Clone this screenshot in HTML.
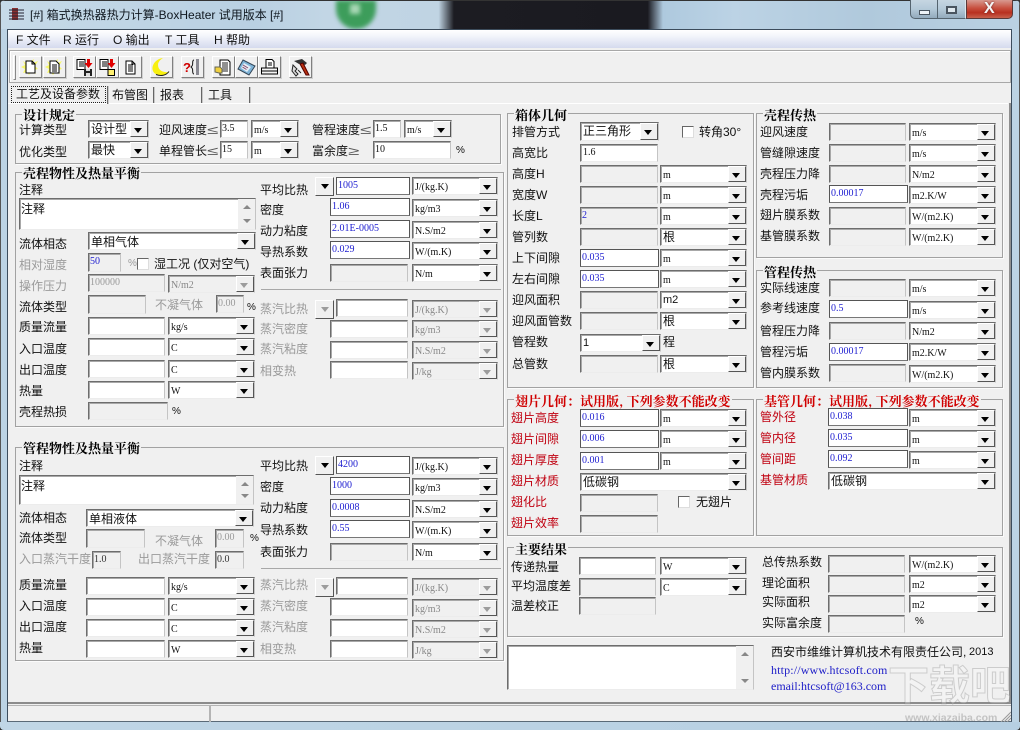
<!DOCTYPE html>
<html lang="zh"><head><meta charset="utf-8"><title>BoxHeater</title>
<style>
html,body{margin:0;padding:0;background:#333}
#a{position:relative;width:1020px;height:730px;overflow:hidden;font:12px/16px "Liberation Sans","Noto Sans CJK SC",sans-serif;color:#111;background:#bcd3e4;border-radius:5px 5px 4px 4px}
#a div,#a span,#a svg{position:absolute;box-sizing:border-box}
.l{white-space:nowrap;height:16px}
.g{color:#9a9a9a}
.r{color:#c00010}
.h{font:bold 13px/15px "Noto Serif CJK SC","Liberation Serif",serif;background:#f0f0f0;padding:0 1px;white-space:nowrap;color:#000;height:15px}
.hr{color:#d00000}
.f{border:1px solid #a2a2a2;box-shadow:1px 1px 0 #fbfbfb}
.q{transform:scaleX(1.7);transform-origin:0 0}
#a .i,#a .c{height:18px;border:1px solid;border-color:#6d6d6d #c4c4c4 #ececec #6d6d6d;box-shadow:inset 1px 1px 0 #a8a8a8;background:#f0f0f0;font:10px/16px "Liberation Serif","Noto Sans CJK SC",serif;padding-left:1px;white-space:nowrap;overflow:hidden}
#a .w{background:#fff}
#a .k{border-color:#555 #555 #777 #555;box-shadow:none}
.u{color:#1c1cd0}
#a .c{background:#fff;line-height:19px;padding-left:2px}
#a .z{font:12px/16px "Liberation Sans","Noto Sans CJK SC",sans-serif}
#a .c.y{font:11px/17px "Liberation Sans",sans-serif}
#a .c b{position:absolute;right:0;top:0;bottom:0;width:16px;background:#f0f0f0;border:1px solid;border-color:#fff #555 #555 #fff}
#a .c b:after,.bt:after{content:"";position:absolute;left:3px;top:6px;border:4px solid transparent;border-top:5px solid #000;border-bottom:0}
#a .d{color:#888;background:#f0f0f0}
#a .d b:after,.bd:after{border-top-color:#9c9c9c!important}
#a .bt{width:19px;height:19px;background:#f0f0f0;border:1px solid;border-color:#fff #555 #555 #fff}
#a .bt:after{left:5px;top:6px}
#a .s{right:0;top:0;bottom:0;width:17px;background:#f0f0f0}
.s:before,.s:after{content:"";position:absolute;left:5px;border:4px solid transparent}
.s:before{top:6px;border-bottom:4px solid #888;border-top:0}
.s:after{bottom:6px;border-top:4px solid #888;border-bottom:0}
#a .tb{top:56px;width:23px;height:22px;background:#f0f0f0;border:1px solid;border-color:#fff #808080 #808080 #fff;box-shadow:1px 1px 0 #d0d0d0}
#a .cb{width:12px;height:12px;background:#fff;border:1px solid;border-color:#666 #ddd #ddd #666}
#a .sp{width:1px;background:#666;box-shadow:1px 0 0 #c8c8c8}
</style></head><body><div id="a">

<!-- aero title background -->
<div style="left:0;top:0;width:1020px;height:29px;background:linear-gradient(90deg,#c6dae8 0,#b9d0e2 25%,#c2d6e5 32%,#c0d4e3 43%,#1c1c22 44.5%,#1a1a20 63.5%,#aec9de 65%,#bcd3e5 72%,#b0c9dc 85%,#bad1e3 100%)"></div>
<div style="left:336px;top:0;width:40px;height:29px;background:#3d9d5b;border-radius:0 0 20px 20px;filter:blur(2px)"></div>
<div style="left:350px;top:4px;width:10px;height:10px;background:#a8d8b5;filter:blur(2px)"></div>
<div style="left:0;top:0;width:1020px;height:1px;background:#333"></div>
<div style="left:0;top:0;width:1px;height:730px;background:#555"></div>
<div style="left:1019px;top:0;width:1px;height:730px;background:#555"></div>
<div style="left:0;top:729px;width:1020px;height:1px;background:#444"></div>
<div style="left:0;top:722px;width:1020px;height:8px;background:linear-gradient(90deg,#c0d6e6,#b6cfe2)"></div>

<!-- window icon -->
<svg style="left:9px;top:7px" width="16" height="14" viewBox="0 0 16 14"><rect x="3" y="1" width="6" height="12" fill="#8a3030"/><path d="M0 3h15M0 6h15M0 9h15M0 12h15" stroke="#223" stroke-width="1"/></svg>
<span class="l" style="left:30px;top:7px;color:#101820">[#] 箱式换热器热力计算-BoxHeater 试用版本 [#]</span>

<!-- window buttons -->
<div style="left:910px;top:0;width:28px;height:19px;background:linear-gradient(#c6d6e2,#b4c9d8 50%,#93aabc);border:1px solid #55646f;border-top:0;border-radius:0 0 0 5px"></div>
<div style="left:919px;top:10px;width:11px;height:5px;background:#eef3f7;border:1px solid #4a5560"></div>
<div style="left:938px;top:0;width:28px;height:19px;background:linear-gradient(#c6d6e2,#b4c9d8 50%,#93aabc);border-bottom:1px solid #55646f;border-right:1px solid #dde6ec"></div>
<div style="left:946px;top:6px;width:11px;height:8px;background:#dfe8ee;border:2px solid #4a5560"></div>
<div style="left:966px;top:0;width:47px;height:19px;background:linear-gradient(#d89a90,#c8503f 45%,#b83020 70%,#c8604c);border:1px solid #5a3a3a;border-top:0;border-radius:0 0 5px 0"></div>
<span class="l" style="left:984px;top:1px;color:#f4f4f4;font-weight:bold;font-size:16px;text-shadow:0 0 2px #6a2020">X</span>

<!-- client -->
<div style="left:7px;top:29px;width:1005px;height:693px;background:#f0f0f0;border:1px solid #3c4c5c;border-bottom-color:#5a6a78"></div>
<div style="left:8px;top:30px;width:1003px;height:18px;background:linear-gradient(#fff,#f4f6fb 30%,#d5daee)"></div>
<span class="l" style="left:16px;top:32px">F 文件</span>
<span class="l" style="left:63px;top:32px">R 运行</span>
<span class="l" style="left:113px;top:32px">O 输出</span>
<span class="l" style="left:165px;top:32px">T 工具</span>
<span class="l" style="left:214px;top:32px">H 帮助</span>

<!-- toolbar -->
<div style="left:9px;top:50px;width:1002px;height:33px;border:1px solid #a8a8a8;box-shadow:inset 1px 1px 0 #fff"></div>
<div style="left:13px;top:55px;width:3px;height:25px;border:1px solid;border-color:#fff #888 #888 #fff"></div>

<div class="tb" style="left:19px"><svg width="21" height="20" viewBox="0 0 21 20"><path d="M3 4l4 3 0-4 3 2 4-3-1 4 5-2-3 5 3 3-4 1 2 4-5-2-2 3-2-3-4 1 2-4-4-2 4-2z" fill="#f8f868"/><path d="M6 4h6l3 3v9H6z" fill="#fff" stroke="#000"/><path d="M12 4v3h3" fill="none" stroke="#000"/></svg></div>
<div class="tb" style="left:43px"><svg width="21" height="20" viewBox="0 0 21 20"><path d="M3 4l4 3 0-4 3 2 4-3-1 4 5-2-3 5 3 3-4 1 2 4-5-2-2 3-2-3-4 1 2-4-4-2 4-2z" fill="#f8f868"/><path d="M6 4h6l3 3v9H6z" fill="#fff" stroke="#000"/><path d="M8 8h5M8 10h5M8 12h5M8 14h5" stroke="#000"/></svg></div>
<div class="tb" style="left:73px"><svg width="21" height="20" viewBox="0 0 21 20"><path d="M3 2.500h8v10H3z" fill="#fff" stroke="#000"/><path d="M5 5h5M5 7h5M5 9h5" stroke="#000"/><path d="M13 2h3v4h2.500l-4 5-4-5H13z" fill="#e00000"/><path d="M10 12h8v7h-8z" fill="#222"/><path d="M12 12h4v2h-4zM12 16h4v3h-4z" fill="#ddd"/></svg></div>
<div class="tb" style="left:96px"><svg width="21" height="20" viewBox="0 0 21 20"><path d="M3 2.500h8v10H3z" fill="#fff" stroke="#000"/><path d="M5 5h5M5 7h5M5 9h5" stroke="#000"/><path d="M13 2h3v4h2.500l-4 5-4-5H13z" fill="#e00000"/><path d="M11 12.500h6.500v6H11z" fill="#fff070" stroke="#000"/></svg></div>
<div class="tb" style="left:119px"><svg width="21" height="20" viewBox="0 0 21 20"><path d="M6 4h6l3 3v10H6z" fill="#fff" stroke="#000"/><path d="M12 4v3h3" fill="none" stroke="#000"/><path d="M8 8h5M8 10h5M8 12h5M8 14h5" stroke="#000"/></svg></div>
<div class="tb" style="left:150px"><svg width="21" height="20" viewBox="0 0 21 20"><path d="M12 1C4 2 0 9 2 14c2 5 11 6 16 1-6 1-11-2-11-7 0-3 2-5 5-7z" fill="#f8f010"/><path d="M5 17.500c5 2 10 1 13-3" fill="none" stroke="#222"/></svg></div>
<div class="tb" style="left:181px"><svg width="21" height="20" viewBox="0 0 21 20"><text x="1" y="15" font-family="Liberation Sans,sans-serif" font-weight="bold" font-size="13" fill="#d00000">?</text><path d="M12 3c-2 0-1 3-1.500 5-.3 1-1 1.500-1.500 2 .5.500 1.200 1 1.500 2 .5 2-.5 5 1.500 5" fill="none" stroke="#111"/><path d="M14 3h3M14 5h3M14 7h3M14 9h3M14 11h3M14 13h3M14 15h3M14 17h3" stroke="#223"/></svg></div>
<div class="tb" style="left:212px"><svg width="21" height="20" viewBox="0 0 21 20"><path d="M7 3h8l2 2v13H7z" fill="#fff" stroke="#000"/><path d="M9 6h6M9 8h6M9 10h6M9 12h6M9 14h6" stroke="#222"/><path d="M2 10h5l2 2v4H6l-4-1z" fill="#f0d040" stroke="#665"/></svg></div>
<div class="tb" style="left:235px"><svg width="21" height="20" viewBox="0 0 21 20"><path d="M7 3l12 6-6 9L2 12z" fill="#7fb4d8" stroke="#345"/><path d="M8 6l7 4-4 5-6-4z" fill="#e4eef6"/><path d="M7 8l5 3M6.500 10l4 2.500" stroke="#8a4a6a"/></svg></div>
<div class="tb" style="left:258px"><svg width="21" height="20" viewBox="0 0 21 20"><path d="M7 2.500h6l2 2V11H7z" fill="#fff" stroke="#000"/><path d="M9 6h4M9 8h4" stroke="#000"/><path d="M2.500 11h16v6h-16z" fill="#f4f4f4" stroke="#000"/><path d="M3 14h15" stroke="#000"/></svg></div>
<div class="tb" style="left:289px"><svg width="21" height="20" viewBox="0 0 21 20"><path d="M4 4l8-2 5 4-2 2-3-2-3 1z" fill="#333"/><path d="M10 7l6 11h3l-6-12z" fill="#b83010" stroke="#500"/><path d="M3 8l4 4-2 2 3 3-2 2-4-5z" fill="#ddd" stroke="#222"/><path d="M8 13l3 3" stroke="#222"/></svg></div>

<!-- tabs -->
<div style="left:8px;top:103px;width:1000px;height:1px;background:#fff"></div>
<div style="left:1009px;top:103px;width:2px;height:599px;background:#8f8f8f"></div>
<div style="left:11px;top:86px;width:95px;height:17px;border:1px dotted #222"></div>
<span class="l" style="left:16px;top:86px">工艺及设备参数</span>
<div class="sp" style="left:107px;top:86px;height:18px"></div>
<span class="l" style="left:112px;top:87px">布管图</span>
<div class="sp" style="left:153px;top:87px;height:16px"></div>
<span class="l" style="left:160px;top:87px">报表</span>
<div class="sp" style="left:201px;top:87px;height:16px"></div>
<span class="l" style="left:208px;top:87px">工具</span>
<div class="sp" style="left:249px;top:87px;height:16px"></div>

<!-- group frames -->
<div class="f" style="left:15px;top:114px;width:486px;height:50px"></div>
<div class="f" style="left:15px;top:172px;width:489px;height:255px"></div>
<div class="f" style="left:15px;top:447px;width:489px;height:214px"></div>
<div class="f" style="left:507px;top:113px;width:247px;height:275px"></div>
<div class="f" style="left:756px;top:113px;width:247px;height:145px"></div>
<div class="f" style="left:756px;top:270px;width:247px;height:118px"></div>
<div class="f" style="left:507px;top:399px;width:247px;height:137px"></div>
<div class="f" style="left:756px;top:399px;width:247px;height:137px"></div>
<div class="f" style="left:507px;top:547px;width:496px;height:90px"></div>

<span class="h" style="left:22px;top:107px">设计规定</span>
<span class="h" style="left:22px;top:165px">壳程物性及热量平衡</span>
<span class="h" style="left:22px;top:440px">管程物性及热量平衡</span>
<span class="h" style="left:514px;top:107px">箱体几何</span>
<span class="h" style="left:763px;top:107px">壳程传热</span>
<span class="h" style="left:763px;top:264px">管程传热</span>
<span class="h hr" style="left:514px;top:393px">翅片几何：试用版, 下列参数不能改变</span>
<span class="h hr" style="left:763px;top:393px">基管几何：试用版, 下列参数不能改变</span>
<span class="h" style="left:514px;top:541px">主要结果</span>

<!-- 设计规定 -->
<span class="l" style="left:19px;top:122px">计算类型</span>
<div class="c z" style="left:88px;top:120px;width:61px">设计型<b></b></div>
<span class="l" style="left:159px;top:122px">迎风速度</span><span class="l q" style="left:207px;top:122px;color:#555">≤</span>
<div class="i w" style="left:220px;top:120px;width:28px">3.5</div>
<div class="c" style="left:251px;top:120px;width:48px">m/s<b></b></div>
<span class="l" style="left:312px;top:122px">管程速度</span><span class="l q" style="left:360px;top:122px;color:#555">≤</span>
<div class="i w" style="left:373px;top:120px;width:28px">1.5</div>
<div class="c" style="left:404px;top:120px;width:48px">m/s<b></b></div>
<span class="l" style="left:19px;top:144px">优化类型</span>
<div class="c z" style="left:88px;top:141px;width:61px">最快<b></b></div>
<span class="l" style="left:159px;top:143px">单程管长</span><span class="l q" style="left:207px;top:143px;color:#555">≤</span>
<div class="i w" style="left:220px;top:141px;width:28px">15</div>
<div class="c" style="left:251px;top:141px;width:48px">m<b></b></div>
<span class="l" style="left:312px;top:143px">富余度</span><span class="l q" style="left:348px;top:143px;color:#555">≥</span>
<div class="i w" style="left:373px;top:141px;width:78px">10</div>
<span class="l" style="left:456px;top:143px;font-size:10px">%</span>

<!-- 壳程 left -->
<span class="l" style="left:19px;top:182px">注释</span>
<div class="i w z" style="left:19px;top:198px;width:237px;height:32px;padding-top:2px">注释<div class="s"></div></div>
<span class="l" style="left:19px;top:236px">流体相态</span>
<div class="c z" style="left:88px;top:232px;width:168px;padding-top:1px">单相气体<b></b></div>
<span class="l g" style="left:19px;top:257px">相对湿度</span>
<div class="i u" style="left:88px;top:253px;width:33px;height:19px">50</div>
<span class="l g" style="left:128px;top:256px;font-size:10px">%</span>
<div class="cb" style="left:137px;top:258px"></div>
<span class="l" style="left:154px;top:256px">湿工况 (仅对空气)</span>
<span class="l g" style="left:19px;top:278px">操作压力</span>
<div class="i g" style="left:88px;top:274px;width:77px">100000</div>
<div class="c d" style="left:168px;top:275px;width:87px">N/m2<b class="bd"></b></div>
<span class="l" style="left:19px;top:299px">流体类型</span>
<div class="i" style="left:88px;top:295px;width:58px;height:19px"></div>
<span class="l g" style="left:155px;top:297px">不凝气体</span>
<div class="i g" style="left:216px;top:295px;width:28px">0.00</div>
<span class="l" style="left:247px;top:300px;font-size:10px">%</span>
<span class="l" style="left:19px;top:319px">质量流量</span>
<div class="i w" style="left:88px;top:317px;width:77px"></div>
<div class="c" style="left:168px;top:317px;width:87px">kg/s<b></b></div>
<span class="l" style="left:19px;top:341px">入口温度</span>
<div class="i w" style="left:88px;top:338px;width:77px"></div>
<div class="c" style="left:168px;top:338px;width:87px">C<b></b></div>
<span class="l" style="left:19px;top:362px">出口温度</span>
<div class="i w" style="left:88px;top:360px;width:77px"></div>
<div class="c" style="left:168px;top:360px;width:87px">C<b></b></div>
<span class="l" style="left:19px;top:383px">热量</span>
<div class="i w" style="left:88px;top:381px;width:77px"></div>
<div class="c" style="left:168px;top:381px;width:87px">W<b></b></div>
<span class="l" style="left:19px;top:404px">壳程热损</span>
<div class="i" style="left:88px;top:402px;width:80px"></div>
<span class="l" style="left:172px;top:404px;font-size:10px">%</span>

<!-- 壳程 right -->
<span class="l" style="left:260px;top:182px">平均比热</span>
<div class="bt" style="left:315px;top:177px"></div>
<div class="i w k u" style="left:336px;top:177px;width:74px">1005</div>
<div class="c" style="left:412px;top:177px;width:86px">J/(kg.K)<b></b></div>
<span class="l" style="left:260px;top:202px">密度</span>
<div class="i w k u" style="left:330px;top:198px;width:80px">1.06</div>
<div class="c" style="left:412px;top:199px;width:86px">kg/m3<b></b></div>
<span class="l" style="left:260px;top:223px">动力粘度</span>
<div class="i w k u" style="left:330px;top:220px;width:80px">2.01E-0005</div>
<div class="c" style="left:412px;top:221px;width:86px">N.S/m2<b></b></div>
<span class="l" style="left:260px;top:244px">导热系数</span>
<div class="i w k u" style="left:330px;top:241px;width:80px">0.029</div>
<div class="c" style="left:412px;top:242px;width:86px">W/(m.K)<b></b></div>
<span class="l" style="left:260px;top:265px">表面张力</span>
<div class="i" style="left:330px;top:264px;width:78px"></div>
<div class="c" style="left:412px;top:264px;width:86px">N/m<b></b></div>
<div style="left:261px;top:289px;width:240px;height:1px;background:#a8a8a8"></div>
<span class="l g" style="left:260px;top:301px">蒸汽比热</span>
<div class="bt bd" style="left:315px;top:300px"></div>
<div class="i w" style="left:336px;top:299px;width:72px"></div>
<div class="c d" style="left:412px;top:300px;width:86px">J/(kg.K)<b class="bd"></b></div>
<span class="l g" style="left:260px;top:321px">蒸汽密度</span>
<div class="i w" style="left:330px;top:320px;width:78px"></div>
<div class="c d" style="left:412px;top:320px;width:86px">kg/m3<b class="bd"></b></div>
<span class="l g" style="left:260px;top:341px">蒸汽粘度</span>
<div class="i w" style="left:330px;top:341px;width:78px"></div>
<div class="c d" style="left:412px;top:341px;width:86px">N.S/m2<b class="bd"></b></div>
<span class="l g" style="left:260px;top:363px">相变热</span>
<div class="i w" style="left:330px;top:361px;width:78px"></div>
<div class="c d" style="left:412px;top:362px;width:86px">J/kg<b class="bd"></b></div>

<!-- 管程 left -->
<span class="l" style="left:19px;top:458px">注释</span>
<div class="i w z" style="left:19px;top:475px;width:235px;height:30px;padding-top:2px">注释<div class="s"></div></div>
<span class="l" style="left:19px;top:510px">流体相态</span>
<div class="c z" style="left:86px;top:509px;width:168px;padding-top:1px">单相液体<b></b></div>
<span class="l" style="left:19px;top:530px">流体类型</span>
<div class="i" style="left:86px;top:529px;width:59px;height:19px"></div>
<span class="l g" style="left:155px;top:533px">不凝气体</span>
<div class="i g" style="left:215px;top:529px;width:29px;height:19px">0.00</div>
<span class="l" style="left:250px;top:531px;font-size:10px">%</span>
<span class="l g" style="left:19px;top:551px">入口蒸汽干度</span>
<div class="i" style="left:92px;top:551px;width:29px;color:#333">1.0</div>
<span class="l g" style="left:138px;top:551px">出口蒸汽干度</span>
<div class="i" style="left:215px;top:551px;width:29px;color:#333">0.0</div>
<span class="l" style="left:19px;top:577px">质量流量</span>
<div class="i w" style="left:86px;top:577px;width:79px"></div>
<div class="c" style="left:168px;top:577px;width:87px">kg/s<b></b></div>
<span class="l" style="left:19px;top:598px">入口温度</span>
<div class="i w" style="left:86px;top:598px;width:79px"></div>
<div class="c" style="left:168px;top:598px;width:87px">C<b></b></div>
<span class="l" style="left:19px;top:619px">出口温度</span>
<div class="i w" style="left:86px;top:619px;width:79px"></div>
<div class="c" style="left:168px;top:619px;width:87px">C<b></b></div>
<span class="l" style="left:19px;top:640px">热量</span>
<div class="i w" style="left:86px;top:640px;width:79px"></div>
<div class="c" style="left:168px;top:640px;width:87px">W<b></b></div>

<!-- 管程 right -->
<span class="l" style="left:260px;top:458px">平均比热</span>
<div class="bt" style="left:315px;top:456px"></div>
<div class="i w k u" style="left:336px;top:456px;width:74px">4200</div>
<div class="c" style="left:412px;top:457px;width:86px">J/(kg.K)<b></b></div>
<span class="l" style="left:260px;top:479px">密度</span>
<div class="i w k u" style="left:330px;top:477px;width:80px">1000</div>
<div class="c" style="left:412px;top:478px;width:86px">kg/m3<b></b></div>
<span class="l" style="left:260px;top:500px">动力粘度</span>
<div class="i w k u" style="left:330px;top:499px;width:80px">0.0008</div>
<div class="c" style="left:412px;top:500px;width:86px">N.S/m2<b></b></div>
<span class="l" style="left:260px;top:522px">导热系数</span>
<div class="i w k u" style="left:330px;top:520px;width:80px">0.55</div>
<div class="c" style="left:412px;top:521px;width:86px">W/(m.K)<b></b></div>
<span class="l" style="left:260px;top:544px">表面张力</span>
<div class="i" style="left:330px;top:543px;width:78px"></div>
<div class="c" style="left:412px;top:543px;width:86px">N/m<b></b></div>
<div style="left:261px;top:568px;width:240px;height:1px;background:#a8a8a8"></div>
<span class="l g" style="left:260px;top:577px">蒸汽比热</span>
<div class="bt bd" style="left:315px;top:578px"></div>
<div class="i w" style="left:336px;top:577px;width:72px"></div>
<div class="c d" style="left:412px;top:578px;width:86px">J/(kg.K)<b class="bd"></b></div>
<span class="l g" style="left:260px;top:598px">蒸汽密度</span>
<div class="i w" style="left:330px;top:598px;width:78px"></div>
<div class="c d" style="left:412px;top:599px;width:86px">kg/m3<b class="bd"></b></div>
<span class="l g" style="left:260px;top:619px">蒸汽粘度</span>
<div class="i w" style="left:330px;top:619px;width:78px"></div>
<div class="c d" style="left:412px;top:620px;width:86px">N.S/m2<b class="bd"></b></div>
<span class="l g" style="left:260px;top:641px">相变热</span>
<div class="i w" style="left:330px;top:640px;width:78px"></div>
<div class="c d" style="left:412px;top:641px;width:86px">J/kg<b class="bd"></b></div>

<!-- 箱体几何 -->
<span class="l" style="left:512px;top:124px">排管方式</span>
<div class="c z" style="left:580px;top:122px;width:79px;height:19px">正三角形<b></b></div>
<div class="cb" style="left:682px;top:126px"></div>
<span class="l" style="left:699px;top:124px">转角30°</span>
<span class="l" style="left:512px;top:145px">高宽比</span>
<div class="i w" style="left:580px;top:144px;width:78px;padding-left:2px">1.6</div>
<span class="l" style="left:512px;top:166px">高度H</span>
<div class="i" style="left:580px;top:165px;width:78px"></div>
<div class="c" style="left:660px;top:165px;width:87px">m<b></b></div>
<span class="l" style="left:512px;top:187px">宽度W</span>
<div class="i" style="left:580px;top:186px;width:78px"></div>
<div class="c" style="left:660px;top:186px;width:87px">m<b></b></div>
<span class="l" style="left:512px;top:208px">长度L</span>
<div class="i u" style="left:580px;top:207px;width:78px">2</div>
<div class="c" style="left:660px;top:207px;width:87px">m<b></b></div>
<span class="l" style="left:512px;top:229px">管列数</span>
<div class="i" style="left:580px;top:228px;width:78px"></div>
<div class="c z" style="left:660px;top:228px;width:87px">根<b></b></div>
<span class="l" style="left:512px;top:250px">上下间隙</span>
<div class="i w k u" style="left:580px;top:249px;width:79px">0.035</div>
<div class="c" style="left:660px;top:249px;width:87px">m<b></b></div>
<span class="l" style="left:512px;top:271px">左右间隙</span>
<div class="i w k u" style="left:580px;top:270px;width:79px">0.035</div>
<div class="c" style="left:660px;top:270px;width:87px">m<b></b></div>
<span class="l" style="left:512px;top:292px">迎风面积</span>
<div class="i" style="left:580px;top:291px;width:78px"></div>
<div class="c y" style="left:660px;top:291px;width:87px">m2<b></b></div>
<span class="l" style="left:512px;top:313px">迎风面管数</span>
<div class="i" style="left:580px;top:312px;width:78px"></div>
<div class="c z" style="left:660px;top:312px;width:87px">根<b></b></div>
<span class="l" style="left:512px;top:334px">管程数</span>
<div class="c y" style="left:580px;top:334px;width:81px">1<b></b></div>
<span class="l" style="left:663px;top:334px">程</span>
<span class="l" style="left:512px;top:356px">总管数</span>
<div class="i" style="left:580px;top:355px;width:78px"></div>
<div class="c z" style="left:660px;top:355px;width:87px">根<b></b></div>

<!-- 壳程传热 -->
<span class="l" style="left:760px;top:124px">迎风速度</span>
<div class="i" style="left:829px;top:123px;width:77px"></div>
<div class="c" style="left:909px;top:123px;width:87px">m/s<b></b></div>
<span class="l" style="left:760px;top:145px">管缝隙速度</span>
<div class="i" style="left:829px;top:144px;width:77px"></div>
<div class="c" style="left:909px;top:144px;width:87px">m/s<b></b></div>
<span class="l" style="left:760px;top:166px">壳程压力降</span>
<div class="i" style="left:829px;top:165px;width:77px"></div>
<div class="c" style="left:909px;top:165px;width:87px">N/m2<b></b></div>
<span class="l" style="left:760px;top:187px">壳程污垢</span>
<div class="i w k u" style="left:829px;top:185px;width:79px">0.00017</div>
<div class="c" style="left:909px;top:186px;width:87px">m2.K/W<b></b></div>
<span class="l" style="left:760px;top:207px">翅片膜系数</span>
<div class="i" style="left:829px;top:207px;width:77px"></div>
<div class="c" style="left:909px;top:207px;width:87px">W/(m2.K)<b></b></div>
<span class="l" style="left:760px;top:228px">基管膜系数</span>
<div class="i" style="left:829px;top:228px;width:77px"></div>
<div class="c" style="left:909px;top:228px;width:87px">W/(m2.K)<b></b></div>

<!-- 管程传热 -->
<span class="l" style="left:760px;top:280px">实际线速度</span>
<div class="i" style="left:829px;top:279px;width:77px"></div>
<div class="c" style="left:909px;top:279px;width:87px">m/s<b></b></div>
<span class="l" style="left:760px;top:300px">参考线速度</span>
<div class="i w k u" style="left:829px;top:300px;width:79px">0.5</div>
<div class="c" style="left:909px;top:301px;width:87px">m/s<b></b></div>
<span class="l" style="left:760px;top:323px">管程压力降</span>
<div class="i" style="left:829px;top:322px;width:77px"></div>
<div class="c" style="left:909px;top:322px;width:87px">N/m2<b></b></div>
<span class="l" style="left:760px;top:344px">管程污垢</span>
<div class="i w k u" style="left:829px;top:343px;width:79px">0.00017</div>
<div class="c" style="left:909px;top:343px;width:87px">m2.K/W<b></b></div>
<span class="l" style="left:760px;top:365px">管内膜系数</span>
<div class="i" style="left:829px;top:364px;width:77px"></div>
<div class="c" style="left:909px;top:365px;width:87px">W/(m2.K)<b></b></div>

<!-- 翅片几何 -->
<span class="l r" style="left:511px;top:410px">翅片高度</span>
<div class="i w k u" style="left:580px;top:409px;width:79px">0.016</div>
<div class="c" style="left:660px;top:409px;width:87px">m<b></b></div>
<span class="l r" style="left:511px;top:431px">翅片间隙</span>
<div class="i w k u" style="left:580px;top:430px;width:79px">0.006</div>
<div class="c" style="left:660px;top:430px;width:87px">m<b></b></div>
<span class="l r" style="left:511px;top:452px">翅片厚度</span>
<div class="i w k u" style="left:580px;top:452px;width:79px">0.001</div>
<div class="c" style="left:660px;top:452px;width:87px">m<b></b></div>
<span class="l r" style="left:511px;top:473px">翅片材质</span>
<div class="c z" style="left:580px;top:473px;width:167px">低碳钢<b></b></div>
<span class="l r" style="left:511px;top:494px">翅化比</span>
<div class="i" style="left:580px;top:494px;width:78px"></div>
<div class="cb" style="left:678px;top:496px"></div>
<span class="l" style="left:696px;top:494px">无翅片</span>
<span class="l r" style="left:511px;top:515px">翅片效率</span>
<div class="i" style="left:580px;top:515px;width:78px"></div>

<!-- 基管几何 -->
<span class="l r" style="left:760px;top:409px">管外径</span>
<div class="i w k u" style="left:828px;top:408px;width:80px">0.038</div>
<div class="c" style="left:909px;top:409px;width:87px">m<b></b></div>
<span class="l r" style="left:760px;top:430px">管内径</span>
<div class="i w k u" style="left:828px;top:429px;width:80px">0.035</div>
<div class="c" style="left:909px;top:430px;width:87px">m<b></b></div>
<span class="l r" style="left:760px;top:451px">管间距</span>
<div class="i w k u" style="left:828px;top:450px;width:80px">0.092</div>
<div class="c" style="left:909px;top:451px;width:87px">m<b></b></div>
<span class="l r" style="left:760px;top:472px">基管材质</span>
<div class="c z" style="left:828px;top:472px;width:168px">低碳钢<b></b></div>

<!-- 主要结果 -->
<span class="l" style="left:511px;top:559px">传递热量</span>
<div class="i w" style="left:579px;top:557px;width:77px"></div>
<div class="c" style="left:660px;top:557px;width:87px">W<b></b></div>
<span class="l" style="left:511px;top:578px">平均温度差</span>
<div class="i" style="left:579px;top:578px;width:77px"></div>
<div class="c" style="left:660px;top:578px;width:87px">C<b></b></div>
<span class="l" style="left:511px;top:598px">温差校正</span>
<div class="i" style="left:579px;top:597px;width:77px"></div>
<span class="l" style="left:762px;top:554px">总传热系数</span>
<div class="i" style="left:828px;top:555px;width:77px"></div>
<div class="c" style="left:909px;top:555px;width:87px">W/(m2.K)<b></b></div>
<span class="l" style="left:762px;top:575px">理论面积</span>
<div class="i" style="left:828px;top:575px;width:77px"></div>
<div class="c" style="left:909px;top:575px;width:87px">m2<b></b></div>
<span class="l" style="left:762px;top:594px">实际面积</span>
<div class="i" style="left:828px;top:595px;width:77px"></div>
<div class="c" style="left:909px;top:595px;width:87px">m2<b></b></div>
<span class="l" style="left:762px;top:615px">实际富余度</span>
<div class="i" style="left:828px;top:615px;width:77px"></div>
<span class="l" style="left:915px;top:614px;font-size:10px">%</span>

<!-- memo and copyright -->
<div class="i w" style="left:507px;top:645px;width:247px;height:45px"><div class="s"></div></div>
<span class="l" style="left:771px;top:644px">西安市维维计算机技术有限责任公司,</span>
<span class="l" style="left:969px;top:644px;font-size:11px">2013</span>
<span class="l" style="left:771px;top:662px;color:#2020c8;font-family:'Liberation Serif',serif;font-size:12px;letter-spacing:.15px">http://www.htcsoft.com</span>
<span class="l" style="left:771px;top:678px;color:#2020c8;font-family:'Liberation Serif',serif;font-size:12px">email:htcsoft@163.com</span>

<!-- status bar -->
<div style="left:8px;top:702px;width:1003px;height:2px;background:#8c8c8c"></div>
<div style="left:8px;top:705px;width:202px;height:17px;border:1px solid #b4b4b4;border-left:0;border-bottom:0"></div>
<div style="left:210px;top:705px;width:801px;height:17px;border-top:1px solid #b4b4b4;border-left:1px solid #b4b4b4"></div>
<svg style="left:1000px;top:711px" width="11" height="11" viewBox="0 0 11 11"><path d="M11 1L1 11M11 4L4 11M11 7L7 11" stroke="#999"/></svg>

<!-- watermark -->
<span class="l" style="left:888px;top:662px;font-size:41px;line-height:48px;height:48px;font-weight:bold;color:rgba(250,250,250,.28);-webkit-text-stroke:1px rgba(120,120,120,.3)">下载吧</span>
<span class="l" style="left:905px;top:713px;font-size:10.500px;line-height:10px;height:10px;font-weight:bold;color:rgba(140,140,140,.45)">www.xiazaiba.com</span>
</div></body></html>
